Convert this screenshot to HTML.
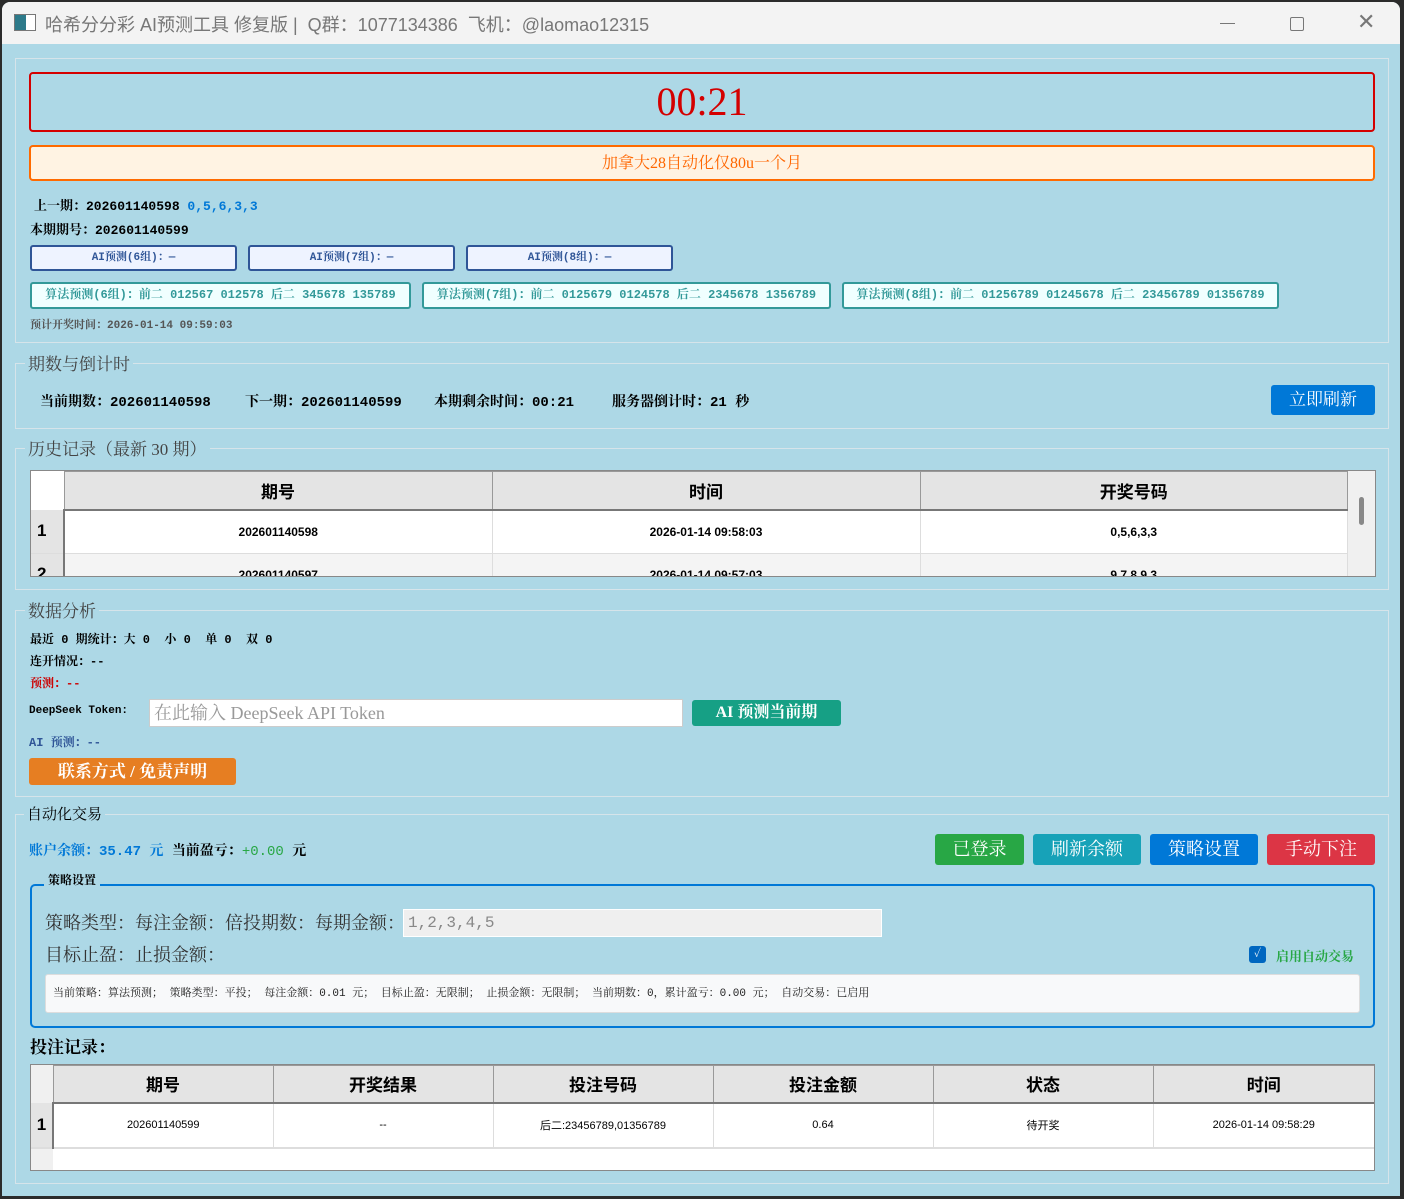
<!DOCTYPE html>
<html><head><meta charset="utf-8"><style>
*{box-sizing:border-box;margin:0;padding:0}
body{width:1404px;height:1199px;background:#2b2b2b;position:relative;overflow:hidden;font-family:"Liberation Serif","Noto Serif CJK SC",serif}
.a{position:absolute}
.m{font-family:"Liberation Mono","Noto Serif CJK SC",monospace}
.win{left:2px;top:2px;width:1398px;height:1194px;background:#add8e6;border-radius:8px 8px 0 0;overflow:hidden}
.title{left:0;top:0;width:1398px;height:42px;background:#f3f3f3}
.grp{position:absolute;border:1px solid #d6e4ea}
.gt{position:absolute;background:#add8e6;padding:0 3px;color:#444;font-size:17px;font-family:"Liberation Serif","Noto Serif CJK SC",serif}
.b{font-weight:bold}
.btn{position:absolute;color:#fff;text-align:center;border-radius:3px;font-family:"Liberation Serif","Noto Serif CJK SC",serif}
.ai{position:absolute;height:26px;background:#eef3ff;border:2px solid #2f5597;border-radius:3px;color:#2f5597;font-size:11px;font-weight:bold;text-align:center;line-height:22px}
.al{position:absolute;height:27px;background:#f0ffff;border:2px solid #339999;border-radius:3px;color:#339999;font-size:12px;font-weight:bold;text-align:center;line-height:23px;white-space:nowrap}
table{border-collapse:collapse;table-layout:fixed;font-family:"Liberation Sans","Noto Sans CJK SC",sans-serif}
td,th{text-align:center;border-right:1px solid #ddd}
th{background:#e4e4e4;border:1px solid #999;border-bottom:2px solid #777;font-size:17px}
</style></head><body>
<div class="a win">
 <div class="a title">
  <div class="a" style="left:12px;top:12px;width:22px;height:17px;border:1px solid #777;background:linear-gradient(90deg,#2d7a8a 0 55%,#fff 55%)"></div>
  <div class="a" style="left:43px;top:9px;font-size:18px;color:#777;font-family:'Liberation Sans','Noto Sans CJK SC',sans-serif">哈希分分彩 AI预测工具 修复版 | &nbsp;Q群：1077134386 &nbsp;飞机：@laomao12315</div>
  <div class="a" style="left:1218px;top:21px;width:15px;height:1px;background:#777"></div>
  <div class="a" style="left:1288px;top:15px;width:14px;height:14px;border:1px solid #777;border-radius:2px"></div>
  <div class="a" style="left:1355px;top:8px;font-size:22px;color:#777;font-family:'DejaVu Sans'">✕</div>
 </div>
 <div class="grp" style="left:13px;top:56px;width:1374px;height:285px"></div>
 <div class="a" style="left:27px;top:70px;width:1346px;height:60px;border:2px solid #d40000;border-radius:4px;text-align:center;color:#d40000;font-size:40px;line-height:56px">00:21</div>
 <div class="a" style="left:27px;top:143px;width:1346px;height:36px;border:2px solid #ff6a00;border-radius:4px;background:#fff3e3;text-align:center;color:#ff6600;font-size:16px;line-height:34px">加拿大28自动化仅80u一个月</div>
 <div class="a b m" style="left:32px;top:193px;font-size:13px">上一期：202601140598 <span style="color:#0078d7">0,5,6,3,3</span></div>
 <div class="a b m" style="left:28px;top:217px;font-size:13px">本期期号：202601140599</div>
 <div class="ai m" style="left:28px;top:243px;width:207px">AI预测(6组)：—</div>
 <div class="ai m" style="left:246px;top:243px;width:207px">AI预测(7组)：—</div>
 <div class="ai m" style="left:464px;top:243px;width:207px">AI预测(8组)：—</div>
 <div class="al m" style="left:28px;top:280px;width:381px">算法预测(6组)：前二 012567 012578 后二 345678 135789</div>
 <div class="al m" style="left:420px;top:280px;width:409px">算法预测(7组)：前二 0125679 0124578 后二 2345678 1356789</div>
 <div class="al m" style="left:840px;top:280px;width:437px">算法预测(8组)：前二 01256789 01245678 后二 23456789 01356789</div>
 <div class="a b m" style="left:28px;top:314px;font-size:11px;color:#555">预计开奖时间：2026-01-14 09:59:03</div>
 <div class="grp" style="left:13px;top:361px;width:1374px;height:66px"></div>
 <div class="gt" style="left:23px;top:348px">期数与倒计时</div>
 <div class="a b m" style="left:38px;top:389px;font-size:14px">当前期数：202601140598</div>
 <div class="a b m" style="left:243px;top:389px;font-size:14px">下一期：202601140599</div>
 <div class="a b m" style="left:432px;top:389px;font-size:14px">本期剩余时间：00:21</div>
 <div class="a b m" style="left:610px;top:389px;font-size:14px">服务器倒计时：21 秒</div>
 <div class="btn" style="left:1269px;top:383px;width:104px;height:30px;background:#0078d7;font-size:17px;line-height:30px">立即刷新</div>
 <div class="grp" style="left:13px;top:446px;width:1374px;height:142px"></div>
 <div class="gt" style="left:23px;top:433px">历史记录（最新 30 期）</div>
 <div class="a" style="left:28px;top:468px;width:1346px;height:107px;border:1px solid #888;background:#f0f0f0;overflow:hidden">
  <div class="a" style="left:0;top:0;width:33px;height:37px;background:#fff"></div>
  <table class="a" style="left:0;top:0;width:1317px">
   <tr style="height:38px"><th style="width:33px;background:#fff;border:none"></th><th style="width:428px">期号</th><th style="width:428px">时间</th><th>开奖号码</th></tr>
   <tr style="height:44px;background:#fff;font-size:12px;font-weight:bold"><td style="background:#e4e4e4;border-right:2px solid #777;font-size:17px;text-align:left;padding-left:6px">1</td><td>202601140598</td><td>2026-01-14 09:58:03</td><td>0,5,6,3,3</td></tr>
   <tr style="height:44px;background:#f4f4f4;font-size:12px;font-weight:bold;border-top:1px solid #ddd"><td style="background:#e4e4e4;border-right:2px solid #777;font-size:17px;text-align:left;padding-left:6px;vertical-align:top;padding-top:10px">2</td><td style="vertical-align:top;padding-top:14px">202601140597</td><td style="vertical-align:top;padding-top:14px">2026-01-14 09:57:03</td><td style="vertical-align:top;padding-top:14px">9,7,8,9,3</td></tr>
  </table>
  <div class="a" style="left:1328px;top:26px;width:5px;height:28px;background:#888;border-radius:3px"></div>
 </div>
 <div class="grp" style="left:13px;top:608px;width:1374px;height:187px"></div>
 <div class="gt" style="left:23px;top:595px">数据分析</div>
 <div class="a b m" style="left:28px;top:628px;font-size:12px">最近 0 期统计：大 0 &nbsp;小 0 &nbsp;单 0 &nbsp;双 0</div>
 <div class="a b m" style="left:28px;top:650px;font-size:12px">连开情况：--</div>
 <div class="a b m" style="left:28px;top:672px;font-size:12px;color:#c00">预测：--</div>
 <div class="a b m" style="left:27px;top:703px;font-size:11px">DeepSeek Token:</div>
 <div class="a" style="left:147px;top:697px;width:534px;height:28px;background:#fff;border:1px solid #ccc;color:#999;font-size:18px;line-height:26px;padding-left:4px">在此输入 DeepSeek API Token</div>
 <div class="btn b m" style="left:690px;top:698px;width:149px;height:26px;background:#16a085;font-size:16px;line-height:26px">AI 预测当前期</div>
 <div class="a b m" style="left:27px;top:731px;font-size:12px;color:#2f5597">AI 预测：--</div>
 <div class="btn b m" style="left:27px;top:756px;width:207px;height:27px;background:#e67e22;font-size:17px;line-height:27px">联系方式 / 免责声明</div>
 <div class="grp" style="left:13px;top:812px;width:1374px;height:370px"></div>
 <div class="gt" style="left:22px;top:801px;color:#000;font-size:15px">自动化交易</div>
 <div class="a b m" style="left:27px;top:838px;font-size:14px;color:#0078d7">账户余额：35.47 元 <span style="color:#000">当前盈亏：</span><span style="color:#28a745;font-weight:normal">+0.00</span> <span style="color:#000">元</span></div>
 <div class="btn" style="left:933px;top:832px;width:89px;height:31px;background:#28a745;font-size:18px;line-height:31px">已登录</div>
 <div class="btn" style="left:1031px;top:832px;width:108px;height:31px;background:#17a2b8;font-size:18px;line-height:31px">刷新余额</div>
 <div class="btn" style="left:1148px;top:832px;width:108px;height:31px;background:#0078d7;font-size:18px;line-height:31px">策略设置</div>
 <div class="btn" style="left:1265px;top:832px;width:108px;height:31px;background:#dc3545;font-size:18px;line-height:31px">手动下注</div>
 <div class="a" style="left:28px;top:882px;width:1345px;height:144px;border:2px solid #0078d7;border-radius:5px"></div>
 <div class="a b" style="left:42px;top:869px;background:#add8e6;padding:0 4px;font-size:12px">策略设置</div>
 <div class="a" style="left:43px;top:907px;font-size:18px;color:#333">策略类型：每注金额：倍投期数：每期金额：</div>
 <div class="a m" style="left:401px;top:907px;width:479px;height:28px;background:#efefef;border:1px solid #fff;color:#888;font-size:16px;line-height:26px;padding-left:4px">1,2,3,4,5</div>
 <div class="a" style="left:43px;top:939px;font-size:18px;color:#333">目标止盈：止损金额：</div>
 <div class="a" style="left:1247px;top:944px;width:17px;height:17px;background:#0067c0;border-radius:3px;color:#fff;font-size:11px;text-align:center;line-height:17px">✓</div>
 <div class="a b" style="left:1274px;top:944px;font-size:13px;color:#28a745">启用自动交易</div>
 <div class="a m" style="left:43px;top:972px;width:1315px;height:39px;background:#f8f9fa;border:1px solid #ddd;border-radius:3px;font-size:11px;line-height:38px;padding-left:7px;color:#222;white-space:nowrap">当前策略：算法预测； 策略类型：平投； 每注金额：0.01 元； 目标止盈：无限制； 止损金额：无限制； 当前期数：0，累计盈亏：0.00 元； 自动交易：已启用</div>
 <div class="a b" style="left:28px;top:1031px;font-size:17px">投注记录：</div>
 <div class="a" style="left:28px;top:1062px;width:1345px;height:107px;border:1px solid #888;background:#fff;overflow:hidden">
  <div class="a" style="left:0;top:0;width:22px;height:107px;background:#f0f0f0"></div>
  <table class="a" style="left:0;top:0;width:1344px">
   <tr style="height:37px"><th style="width:22px;background:#f0f0f0;border:none"></th><th style="width:220px">期号</th><th style="width:220px">开奖结果</th><th style="width:220px">投注号码</th><th style="width:220px">投注金额</th><th style="width:220px">状态</th><th>时间</th></tr>
   <tr style="height:45px;font-size:11px;border-bottom:2px solid #ddd"><td style="background:#e4e4e4;border-right:2px solid #777;font-size:17px;font-weight:bold">1</td><td>202601140599</td><td>--</td><td>后二:23456789,01356789</td><td>0.64</td><td>待开奖</td><td>2026-01-14 09:58:29</td></tr>
  </table>
 </div>
</div>
</body></html>
